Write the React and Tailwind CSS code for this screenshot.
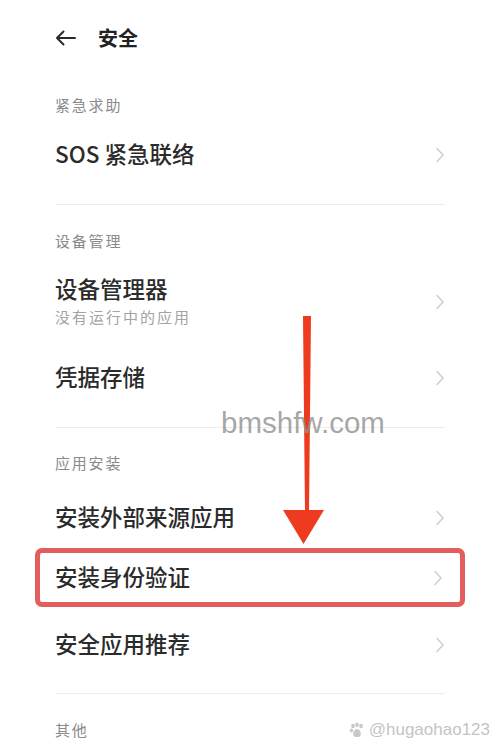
const font = { fontFamily: '"Noto Sans CJK SC", "Noto Sans", sans-serif' };

function Chevron() {
  return (
    <svg width="10" height="16" viewBox="0 0 10 16" fill="none" className="shrink-0">
      <path d="M2 1.5 L8 8 L2 14.5" stroke="#cfcfcf" strokeWidth="1.6" strokeLinecap="round" strokeLinejoin="round" />
    </svg>
  );
}

function Label({ text, h }) {
  return (
    <div className={`flex items-center ${h} text-[15px] tracking-[1.8px] text-[#8a8a8a]`}>{text}</div>
  );
}

function Row({ title, sub, h }) {
  return (
    <div className={`flex items-center justify-between ${h}`}>
      <div className="flex flex-col pb-[4px]">
        <span className="text-[22.5px] leading-[28px] font-medium text-[#2b2b2b]">{title}</span>
        {sub && <span className="mt-[6px] text-[15px] leading-[18px] tracking-[2px] text-[#a3a3a3]">{sub}</span>}
      </div>
      <Chevron />
    </div>
  );
}

function Divider({ h }) {
  return (
    <div className={`flex items-center ${h}`}>
      <div className="h-px w-full bg-[#ececec]" />
    </div>
  );
}

export default function App() {
  return (
    <div className="relative h-[751px] w-[500px] overflow-hidden bg-white" style={font}>
      <div className="flex h-[76px] items-center gap-[22px] px-[55px]">
        <svg width="21" height="16" viewBox="0 0 21 16" fill="none">
          <path d="M20 8 H2 M8.5 1.5 L2 8 L8.5 14.5" stroke="#2a2a2a" strokeWidth="2" strokeLinecap="round" strokeLinejoin="round" />
        </svg>
        <span className="text-[20px] font-bold text-[#222]">安全</span>
      </div>

      <div className="px-[55px]">
        <Label text="紧急求助" h="h-[58px]" />
        <Row title="SOS 紧急联络" h="h-[42px]" />
        <Divider h="h-[56px]" />
        <Label text="设备管理" h="h-[18px]" />
        <div className="pt-[20px]">
          <Row title="设备管理器" sub="没有运行中的应用" h="h-[64px]" />
        </div>
        <Row title="凭据存储" h="h-[88px]" />
        <Divider h="h-[10px]" />
        <Label text="应用安装" h="h-[62px]" />
        <Row title="安装外部来源应用" h="h-[48px]" />
      </div>

      <div className="h-[72px] px-[35px] pt-[6px]">
        <div className="flex h-[59px] items-center justify-between rounded-[7px] border-[5px] border-[#e35d5d] pl-[15px] pr-[17px]">
          <span className="pb-[3px] text-[22.5px] leading-[28px] font-medium text-[#2b2b2b]">安装身份验证</span>
          <Chevron />
        </div>
      </div>

      <div className="px-[55px]">
        <Row title="安全应用推荐" h="h-[62px]" />
        <Divider h="h-[34px]" />
        <Label text="其他" h="h-[40px]" />
      </div>

      {/* pointer arrow over the list */}
      <svg className="absolute left-[283px] top-[316px]" width="41" height="229" viewBox="0 0 41 229">
        <polygon points="20,0 28,0 26,196 22,196" fill="#ee3b1f" />
        <polygon points="0,194 41,194 20.5,228" fill="#ee3b1f" />
      </svg>

      <div
        className="pointer-events-none absolute left-[221px] top-[404px] text-[29.5px] leading-[38px] text-[#8f8f8f]/80"
        style={{ fontFamily: '"Liberation Sans", Arial, sans-serif' }}
      >
        bmshfw.com
      </div>

      <div className="pointer-events-none absolute right-[10px] top-[720px] flex items-center gap-[4px] text-[17px] leading-[20px] text-[#c4c4c4]"
        style={{ fontFamily: '"Liberation Sans", Arial, sans-serif' }}>
        <svg width="16" height="16" viewBox="0 0 16 16" fill="#c8c8c8">
          <ellipse cx="4" cy="4" rx="1.8" ry="2.3" />
          <ellipse cx="8" cy="2.8" rx="1.8" ry="2.3" />
          <ellipse cx="12" cy="4" rx="1.8" ry="2.3" />
          <ellipse cx="2.5" cy="8.5" rx="1.6" ry="2" />
          <path d="M8 7 C5 7 3.5 11 4.5 13.5 C5.5 15.5 10.5 15.5 11.5 13.5 C12.5 11 11 7 8 7Z" />
        </svg>
        <span>@hugaohao123</span>
      </div>
    </div>
  );
}
